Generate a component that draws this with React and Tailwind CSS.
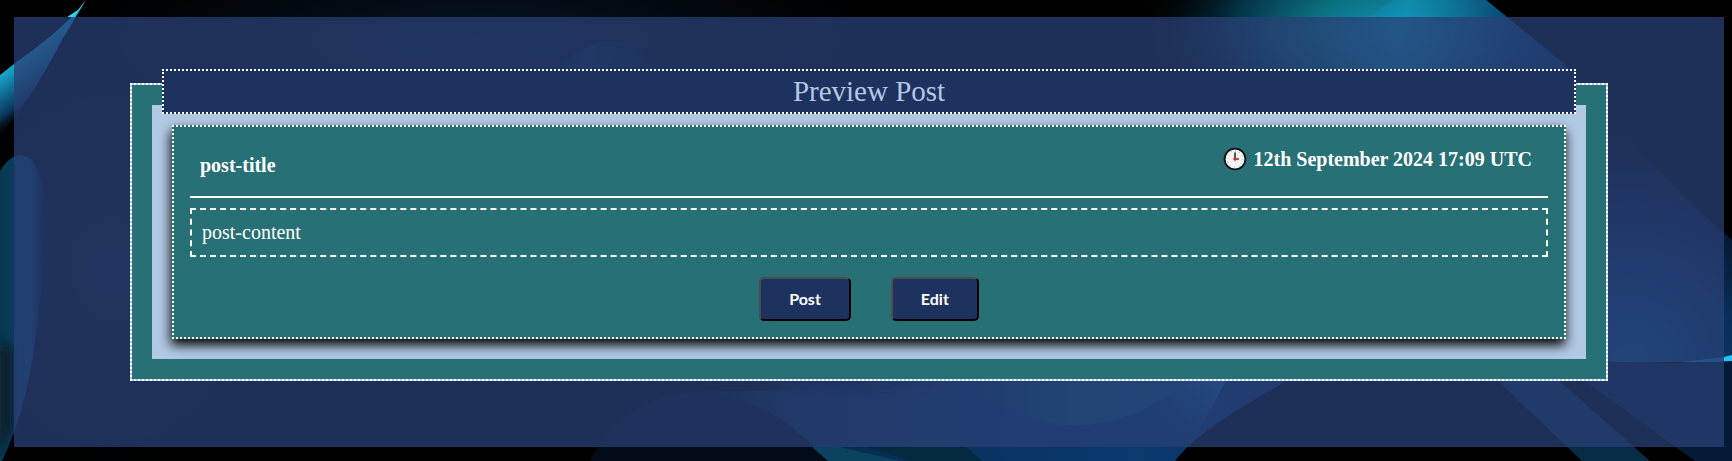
function Backdrop() {
  return (
    <svg
      className="absolute inset-0 h-full w-full"
      viewBox="0 0 1732 461"
      preserveAspectRatio="none"
      aria-hidden="true"
    >
      <defs>
        <linearGradient id="ribbon" gradientUnits="userSpaceOnUse" x1="8" y1="66" x2="40" y2="108">
          <stop offset="0" stopColor="#18b0d2" />
          <stop offset="0.35" stopColor="#10719a" />
          <stop offset="0.7" stopColor="#0a3558" />
          <stop offset="1" stopColor="#020a16" stopOpacity="0" />
        </linearGradient>
        <linearGradient id="leftWave" gradientUnits="userSpaceOnUse" x1="0" y1="0" x2="44" y2="0">
          <stop offset="0" stopColor="#07384c" />
          <stop offset="0.45" stopColor="#0d3e63" />
          <stop offset="0.7" stopColor="#0c3c68" />
          <stop offset="1" stopColor="#0a3058" stopOpacity="0.1" />
        </linearGradient>
        <radialGradient id="topGlow" gradientUnits="userSpaceOnUse" cx="1390" cy="30" r="260" gradientTransform="translate(0 14) scale(1 0.5)">
          <stop offset="0" stopColor="#0f8fb0" />
          <stop offset="0.3" stopColor="#0b7080" />
          <stop offset="0.6" stopColor="#053347" />
          <stop offset="1" stopColor="#000" stopOpacity="0" />
        </radialGradient>
        <linearGradient id="topBeam" gradientUnits="userSpaceOnUse" x1="1340" y1="0" x2="1530" y2="40">
          <stop offset="0" stopColor="#0d7ba5" stopOpacity="0.2" />
          <stop offset="0.35" stopColor="#14a0cc" stopOpacity="0.8" />
          <stop offset="0.9" stopColor="#0b3c78" />
        </linearGradient>
        <radialGradient id="softBlue">
          <stop offset="0" stopColor="#0c3f70" stopOpacity="0.7" />
          <stop offset="1" stopColor="#0c3f70" stopOpacity="0" />
        </radialGradient>
        <linearGradient id="humpFade" x1="0" y1="0" x2="1" y2="0">
          <stop offset="0" stopColor="#0b4672" stopOpacity="0" />
          <stop offset="0.4" stopColor="#0b4672" stopOpacity="0.6" />
          <stop offset="1" stopColor="#0b4672" stopOpacity="0" />
        </linearGradient>
        <linearGradient id="bottomWave" gradientUnits="userSpaceOnUse" x1="690" y1="0" x2="1330" y2="0">
          <stop offset="0" stopColor="#04182c" stopOpacity="0.2" />
          <stop offset="0.16" stopColor="#072846" />
          <stop offset="0.35" stopColor="#08305a" />
          <stop offset="0.7" stopColor="#0b3a70" />
          <stop offset="1" stopColor="#0a2c52" />
        </linearGradient>
        <linearGradient id="bottomBowl" x1="0" y1="0" x2="1" y2="0">
          <stop offset="0" stopColor="#083056" stopOpacity="0" />
          <stop offset="0.5" stopColor="#0b5873" />
          <stop offset="1" stopColor="#0d6088" />
        </linearGradient>
        <linearGradient id="bottomShine" gradientUnits="userSpaceOnUse" x1="1200" y1="370" x2="1150" y2="430">
          <stop offset="0" stopColor="#1468a4" />
          <stop offset="1" stopColor="#0b3a70" stopOpacity="0" />
        </linearGradient>
        <radialGradient id="rightGlow" gradientUnits="userSpaceOnUse" cx="1630" cy="361" r="230">
          <stop offset="0" stopColor="#0d507c" />
          <stop offset="0.45" stopColor="#09305c" />
          <stop offset="0.8" stopColor="#051a38" stopOpacity="0.6" />
          <stop offset="1" stopColor="#010610" stopOpacity="0" />
        </radialGradient>
        <filter id="soften" x="-20%" y="-20%" width="140%" height="140%">
          <feGaussianBlur stdDeviation="5" />
        </filter>
      </defs>

      <rect width="1732" height="461" fill="#000" />
      <ellipse cx="480" cy="40" rx="400" ry="110" fill="url(#softBlue)" opacity="0.45" />
      <path d="M562 66 Q610 16 655 66 L660 110 H540Z" fill="url(#humpFade)" opacity="0.6" />
      <ellipse cx="110" cy="270" rx="160" ry="200" fill="url(#softBlue)" opacity="0.35" />

      <path d="M86 0 L78 10 C58 32 36 48 14 64 L0 75 V135 C25 108 52 60 62 40 Z" fill="url(#ribbon)" />
      <path d="M86 0 L78 10 L67 17 H74 Z" fill="#3bd0f5" />
      <path d="M0 171 C10 155 22 150 33 162 C54 192 50 250 40 300 C34 370 20 425 2 461 H0Z" fill="url(#leftWave)" />
      <path d="M0 340 L14 350 L14 425 L0 455Z" fill="#0a1424" opacity="0.8" filter="url(#soften)" />

      <path d="M1080 0 H1486 L1570 68 V180 H1080Z" fill="url(#topGlow)" />
      <path d="M1392 0 H1486 L1566 66 L1600 110 H1250 L1306 64Z" fill="url(#topBeam)" opacity="0.6" />

      <path d="M1560 100 H1600 Q1650 170 1732 240 V357 Q1670 366 1560 360Z" fill="url(#rightGlow)" />
      <path d="M1600 361 Q1670 366 1732 361 V461 H1695 L1585 381 L1560 361Z" fill="#051a36" />
      <path d="M1680 362 Q1710 359 1732 356 V361 Q1710 363 1680 362Z" fill="#1490bc" />
      <path d="M1724 357 L1732 355 V361 H1724Z" fill="#25c2f5" />

      <path d="M590 461 C620 400 680 386 725 394 C770 402 800 430 828 461Z" fill="#020b18" />
      <path d="M700 391 C780 391 840 391 900 378 L940 340 H1330 L1280 385 C1235 410 1195 435 1175 461 H828 C790 420 755 397 700 391Z" fill="url(#bottomWave)" />
      <path d="M780 378 H930 V384 L860 396 L780 392Z" fill="#051c36" filter="url(#soften)" />
      <path d="M920 350 Q1070 490 1200 370 L1220 350Z" fill="url(#bottomBowl)" opacity="0.75" />
      <path d="M1100 422 Q1150 410 1185 381 H1226 L1190 447 H1100Z" fill="url(#bottomShine)" />
      <path d="M828 461 L812 447 H840 L900 461Z" fill="#0a4260" />
      <path d="M866 447 H966 L982 461 H910Z" fill="#052a40" />
      <path d="M1495 378 H1556 L1650 461 H1582Z" fill="#072c46" />
    </svg>
  );
}

function ClockIcon() {
  return (
    <svg viewBox="0 0 24 24" className="size-6 shrink-0" aria-hidden="true">
      <circle cx="12" cy="12" r="10.4" fill="#f4f4f4" stroke="#111" strokeWidth="1.8" />
      <circle cx="12" cy="12" r="8" fill="none" stroke="#999" strokeWidth="1" strokeDasharray="0.7 3.489" />
      <path d="M12 5.5V12" stroke="#222" strokeWidth="1.5" />
      <path d="M12 12H16" stroke="#444" strokeWidth="1.5" />
      <circle cx="12" cy="12" r="1.7" fill="#e0203c" />
    </svg>
  );
}

function ActionButton({ children }) {
  return (
    <button
      type="button"
      className="h-11 rounded-[5px] border-2 border-t-[#4c4c4c] border-r-black border-b-black border-l-[#4c4c4c] bg-[#1d325e] px-7 font-['Lato',sans-serif] text-[16px] font-bold text-white"
    >
      {children}
    </button>
  );
}

export default function App() {
  return (
    <div className="relative bg-black pt-[17px] pr-2 pb-[14px] pl-[14px] font-['Liberation_Serif',serif] text-white">
      <Backdrop />
      <main className="relative bg-[#294075]/75 px-[116px] py-[66px]">
        <section className="border-2 border-dotted border-white bg-[#b2c9e4]">
          <div className="border-20 border-[#277075]">
            <h1 className="mx-[10px] -mt-9 border-2 border-dotted border-white bg-[#1d325e] text-center text-[29px] leading-[41px] text-[#b2c9e4]">
              Preview Post
            </h1>
            <article className="mx-5 mt-[11px] mb-5 border-2 border-dotted border-white bg-[#277075] px-4 pb-4 shadow-[-1px_6px_11px_#000]">
              <header className="flex items-start justify-between border-b-2 border-white pt-5 pr-4 pb-[19px] pl-[10px] text-[20px] leading-6 font-bold">
                <h2 className="mt-[6px]">post-title</h2>
                <p className="flex items-center gap-[6px]">
                  <ClockIcon />
                  <time dateTime="2024-09-12T17:09Z">12th September 2024 17:09 UTC</time>
                </p>
              </header>
              <p className="mt-[10px] border-2 border-dashed border-white p-[10px] text-[20px] leading-[25px]">
                post-content
              </p>
              <div className="mt-5 flex justify-center gap-10">
                <ActionButton>Post</ActionButton>
                <ActionButton>Edit</ActionButton>
              </div>
            </article>
          </div>
        </section>
      </main>
    </div>
  );
}
